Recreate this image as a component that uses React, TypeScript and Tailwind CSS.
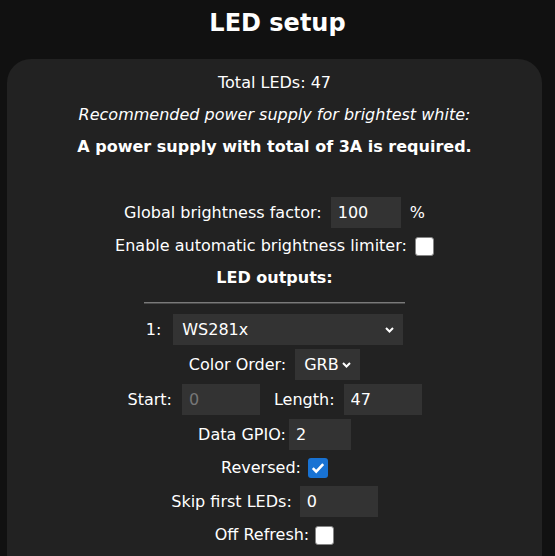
import React from "react";

const Chevron = () => (
  <svg width="9" height="6" viewBox="0 0 9 6" className="pointer-events-none">
    <path d="M1 1l3.5 3.5L8 1" stroke="white" strokeWidth="2" fill="none" />
  </svg>
);

const Box = ({ checked }: { checked?: boolean }) =>
  checked ? (
    <span className="inline-flex w-[20px] h-[20px] rounded-[3px] bg-[#1872d3] items-center justify-center shrink-0">
      <svg width="14" height="12" viewBox="0 0 14 12">
        <path d="M1.8 6.2l3.4 3.4L12.2 2.2" stroke="white" strokeWidth="2.6" fill="none" />
      </svg>
    </span>
  ) : (
    <span className="inline-block w-[19px] h-[19px] rounded-[3px] bg-white border border-[#858585] shrink-0" />
  );

const Input = ({ value, w, muted }: { value: string; w: string; muted?: boolean }) => (
  <input
    readOnly
    value={value}
    className={`${w} h-[31px] bg-[#333] border-0 outline-none pl-[7px] ${muted ? "text-[#777]" : "text-white"}`}
  />
);

const Row = ({ children, gap, h = "h-[32px]" }: { children: React.ReactNode; gap?: string; h?: string }) => (
  <div className={`flex ${h} items-center justify-center ${gap ?? "gap-[9px]"}`}>{children}</div>
);

export default function App() {
  return (
    <div
      className="min-h-[556px] bg-[#111] text-white text-[16px] leading-[32px]"
      style={{ fontFamily: '"DejaVu Sans", Verdana, sans-serif' }}
    >
      <div className="h-[59px] text-center text-[24px] font-bold leading-[47px]">LED setup</div>
      <div className="ml-[7px] w-[535px] h-[520px] rounded-[24px] bg-[#222] pt-[8px]">
        <Row>Total LEDs: 47</Row>
        <Row>
          <i>Recommended power supply for brightest white:</i>
        </Row>
        <Row>
          <b>A power supply with total of 3A is required.</b>
        </Row>
        <Row>{"\u00a0"}</Row>
        <Row h="h-[35px]">
          <span>Global brightness factor:</span>
          <Input value="100" w="w-[70px]" />
          <span>%</span>
        </Row>
        <Row gap="gap-[8px]">
          <span>Enable automatic brightness limiter:</span>
          <Box />
        </Row>
        <Row>
          <b>LED outputs:</b>
        </Row>
        <div className="h-[18px] flex items-center justify-center">
          <div className="w-[261px] border-t border-t-[#7a7a7a] border-b border-b-[#4a4a4a]" />
        </div>
        <Row h="h-[35px]" gap="gap-[12px]">
          <span>1:</span>
          <div className="relative w-[230px] h-[31px] bg-[#333] flex items-center pl-[9px]">
            <span>WS281x</span>
            <span className="absolute right-[9px] top-[13px] flex">
              <Chevron />
            </span>
          </div>
        </Row>
        <Row h="h-[35px]">
          <span>Color Order:</span>
          <div className="relative w-[65px] h-[31px] bg-[#333] flex items-center pl-[9px]">
            <span>GRB</span>
            <span className="absolute right-[9px] top-[13px] flex">
              <Chevron />
            </span>
          </div>
        </Row>
        <Row h="h-[35px]" gap="gap-0">
          <span className="mr-[10px]">Start:</span>
          <Input value="0" w="w-[78px]" muted />
          <span className="ml-[14px] mr-[9px]">Length:</span>
          <Input value="47" w="w-[78px]" />
        </Row>
        <Row h="h-[35px]" gap="gap-[3px]">
          <span>Data GPIO:</span>
          <Input value="2" w="w-[62px]" />
        </Row>
        <Row gap="gap-[7px]">
          <span>Reversed:</span>
          <Box checked />
        </Row>
        <Row h="h-[35px]" gap="gap-[8px]">
          <span>Skip first LEDs:</span>
          <Input value="0" w="w-[78px]" />
        </Row>
        <Row gap="gap-[6px]">
          <span>Off Refresh:</span>
          <Box />
        </Row>
      </div>
    </div>
  );
}
